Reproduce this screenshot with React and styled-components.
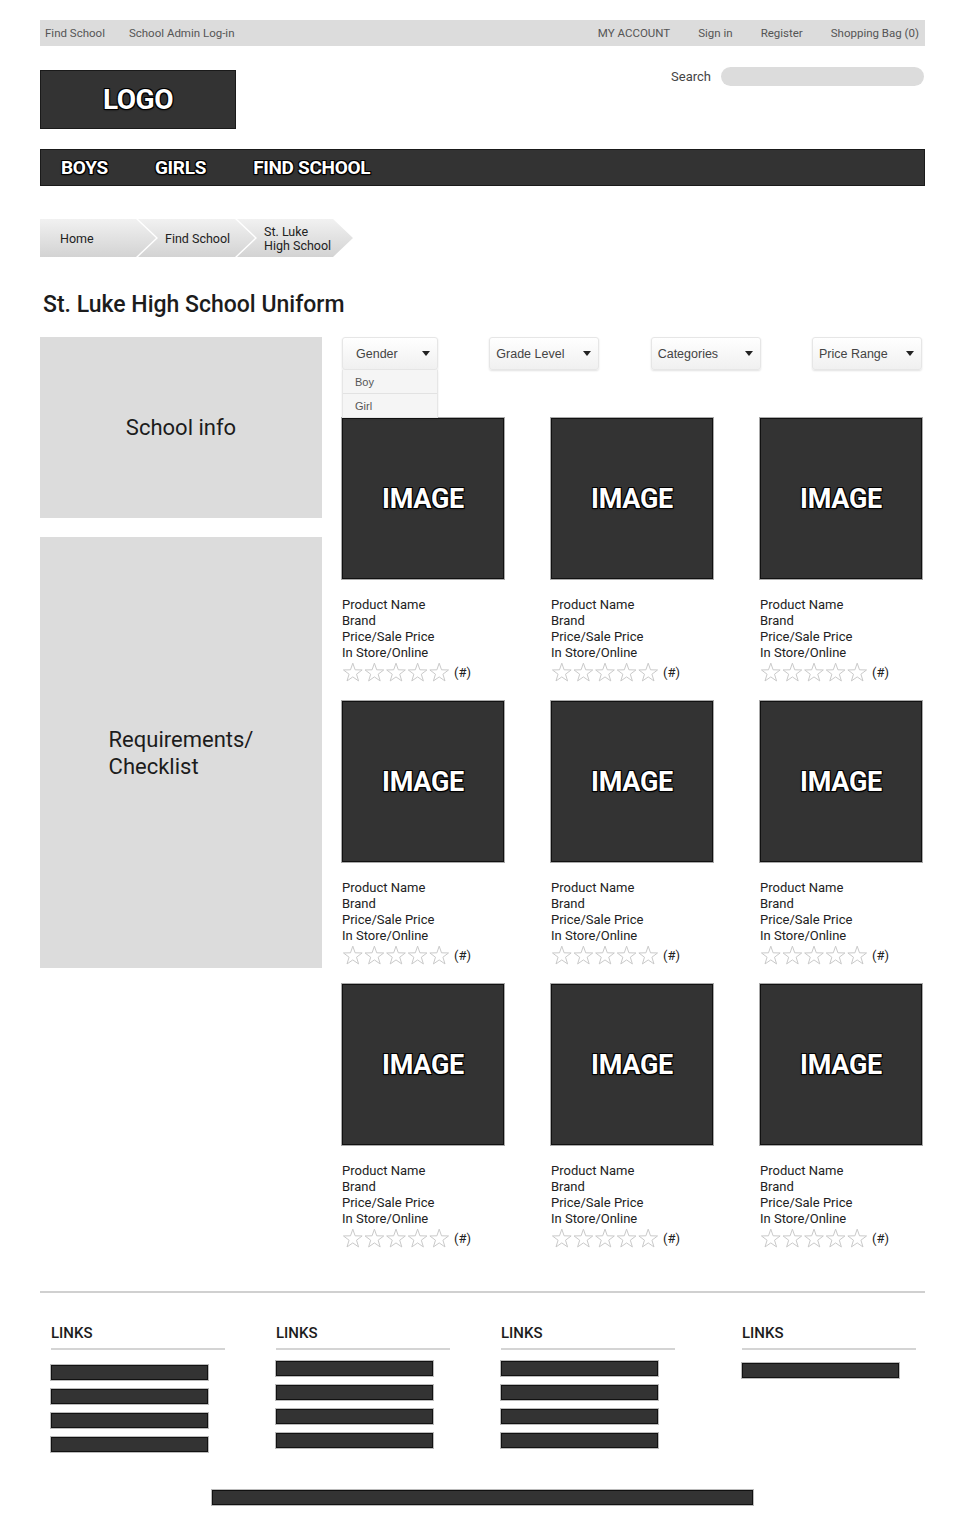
import React from 'react'
import styled, { createGlobalStyle } from 'styled-components'

const GlobalStyle = createGlobalStyle`
  body {
    margin: 0;
    background: #fff;
    font-family: Roboto, "Liberation Sans", sans-serif;
    color: #222;
  }
`

const outline = `
  -1px -1px 0 #000, 1px -1px 0 #000, -1px 1px 0 #000, 1px 1px 0 #000, 0 1px 2px #000
`

const Page = styled.div`
  width: 885px;
  margin: 0 0 0 40px;
  padding: 20px 0 27px;
`

const TopBar = styled.div`
  display: flex;
  align-items: center;
  height: 26px;
  padding: 0 6px 0 5px;
  background: #dcdcdc;
  font-size: 11.5px;
  color: #555;
`

const TopGroup = styled.div`
  display: flex;
  gap: ${p => p.$gap}px;
  margin-left: ${p => (p.$right ? 'auto' : '0')};
`

const Header = styled.div`
  display: flex;
  justify-content: space-between;
  align-items: flex-start;
  margin-top: 21px;
`

const Logo = styled.div`
  width: 194px;
  height: 57px;
  margin-top: 3px;
  background: #333;
  border: 1px solid #1a1a1a;
  display: flex;
  align-items: center;
  justify-content: center;
  color: #fff;
  font-size: 28px;
  font-weight: 700;
  letter-spacing: -0.5px;
  text-shadow: ${outline};
`

const SearchRow = styled.div`
  display: flex;
  align-items: center;
  gap: 10px;
  font-size: 13px;
  color: #444;
  padding-right: 1px;
`

const SearchInput = styled.div`
  width: 203px;
  height: 19px;
  border-radius: 10px;
  background: #dcdcdc;
`

const Nav = styled.div`
  display: flex;
  align-items: center;
  gap: 47px;
  height: 37px;
  margin-top: 20px;
  padding-left: 20px;
  background: #333;
  border: 1px solid #1a1a1a;
  box-sizing: border-box;
  color: #fff;
  font-size: 19px;
  font-weight: 700;
  letter-spacing: -0.3px;
  text-shadow: ${outline};
`

const Crumbs = styled.div`
  display: flex;
  margin-top: 33px;
  height: 38px;
`

const Crumb = styled.div`
  display: flex;
  align-items: center;
  box-sizing: border-box;
  width: ${p => p.$w}px;
  margin-left: ${p => (p.$first ? 0 : -20)}px;
  padding: 2px 0 0 ${p => (p.$first ? 20 : 27)}px;
  background: linear-gradient(to bottom, #f1f1f1, #d3d3d3);
  font-size: 12.5px;
  line-height: 14px;
  color: #222;
  clip-path: ${p =>
    p.$first
      ? 'polygon(0 0, calc(100% - 22px) 0, calc(100% - 2px) 50%, calc(100% - 22px) 100%, 0 100%)'
      : 'polygon(0 0, calc(100% - 22px) 0, calc(100% - 2px) 50%, calc(100% - 22px) 100%, 0 100%, 20px 50%)'};
`

const Title = styled.h1`
  margin: 34px 0 0 3px;
  font-size: 23px;
  line-height: 28px;
  font-weight: 500;
  color: #1c1c1c;
`

const Main = styled.div`
  display: grid;
  grid-template-columns: 282px 580px;
  column-gap: 20px;
  margin-top: 18px;
`

const Sidebar = styled.div`
  display: flex;
  flex-direction: column;
  gap: 19px;
`

const InfoBox = styled.div`
  height: ${p => p.$h}px;
  background: #dcdcdc;
  display: flex;
  align-items: center;
  justify-content: center;
  font-size: 22px;
  line-height: 27px;
  color: #1c1c1c;
`

const Filters = styled.div`
  display: flex;
  justify-content: space-between;
  position: relative;
  z-index: 2;
`

const Dropdown = styled.div`
  position: relative;
  width: ${p => p.$w}px;
`

const DropButton = styled.div`
  display: flex;
  align-items: center;
  justify-content: space-between;
  box-sizing: border-box;
  height: 33px;
  padding: 0 7px 0 ${p => p.$pad}px;
  background: linear-gradient(to bottom, #ffffff, #f0f0f0);
  border: 1px solid #e6e6e6;
  border-radius: 3px;
  box-shadow: 0 1px 2px rgba(0, 0, 0, 0.12);
  font-family: "Liberation Sans", Arial, sans-serif;
  font-size: 12.5px;
  color: #444;
`

const Caret = styled.span`
  width: 0;
  height: 0;
  border-left: 4px solid transparent;
  border-right: 4px solid transparent;
  border-top: 5px solid #222;
`

const Menu = styled.div`
  position: absolute;
  top: 33px;
  left: 0;
  right: 0;
  background: #f5f5f5;
  border: 1px solid #e6e6e6;
  border-top: none;
  box-shadow: 0 1px 2px rgba(0, 0, 0, 0.1);
  font-family: "Liberation Sans", Arial, sans-serif;
  font-size: 11px;
  color: #555;
`

const MenuItem = styled.div`
  height: 23px;
  line-height: 25px;
  padding-left: 12px;
  & + & {
    border-top: 1px solid #e2e2e2;
  }
`

const Grid = styled.div`
  display: grid;
  grid-template-columns: repeat(3, 162px);
  column-gap: 47px;
  row-gap: 18px;
  margin-top: 48px;
`

const Card = styled.div`
  display: flex;
  flex-direction: column;
`

const ImageBox = styled.div`
  height: 161px;
  box-sizing: border-box;
  background: #333;
  border: 1px solid #111;
  box-shadow: 0 0 0 1px #aaa;
  display: flex;
  align-items: center;
  justify-content: center;
  color: #fff;
  font-size: 27px;
  font-weight: 700;
  letter-spacing: -0.3px;
  text-shadow: ${outline};
`

const Info = styled.div`
  margin-top: 18px;
  font-size: 13px;
  line-height: 16px;
  color: #222;
`

const Rating = styled.div`
  display: flex;
  align-items: center;
  gap: 4px;
  height: 21px;
  margin-top: 1px;
  font-size: 13px;
  color: #222;
`

const Footer = styled.div`
  margin-top: 42px;
  border-top: 2px solid #d0d0d0;
`

const LinkCols = styled.div`
  display: grid;
  grid-template-columns: 225px 225px 241px 174px;
  padding-left: 11px;
  margin-top: 31px;
`

const LinkCol = styled.div`
  width: 174px;
`

const LinkTitle = styled.div`
  font-size: 15px;
  font-weight: 500;
  line-height: 18px;
  color: #1c1c1c;
  padding-bottom: 6px;
  border-bottom: 2px solid #d4d4d4;
`

const Bars = styled.div`
  display: flex;
  flex-direction: column;
  gap: 9px;
  margin-top: ${p => p.$top}px;
`

const Bar = styled.div`
  width: ${p => p.$w}px;
  height: 15px;
  box-sizing: border-box;
  background: #333;
  border: 1px solid #111;
  box-shadow: 0 0 0 1px #bbb;
`

const BottomBar = styled(Bar)`
  margin: 38px auto 0;
`

const Stars = () => (
  <svg width="108" height="21" viewBox="0 0 110 21">
    {[0, 1, 2, 3, 4].map(i => (
      <polygon
        key={i}
        transform={`translate(${i * 22} 0)`}
        points="11,1 13.35,7.76 20.51,7.91 14.8,12.24 16.88,19.09 11,15 5.12,19.09 7.2,12.24 1.49,7.91 8.65,7.76"
        fill="none"
        stroke="#c8c8c8"
        strokeWidth="1"
        strokeLinejoin="round"
      />
    ))}
  </svg>
)

const filters = [
  { label: 'Gender', w: 96, pad: 13, menu: ['Boy', 'Girl'] },
  { label: 'Grade Level', w: 110, pad: 6 },
  { label: 'Categories', w: 110, pad: 6 },
  { label: 'Price Range', w: 110, pad: 6 },
]

const linkCols = [
  { bars: 4, top: 15 },
  { bars: 4, top: 11 },
  { bars: 4, top: 11 },
  { bars: 1, top: 13 },
]

const App = () => {
  return (
    <Page>
      <GlobalStyle />
      <TopBar>
        <TopGroup $gap={24}>
          <span>Find School</span>
          <span>School Admin Log-in</span>
        </TopGroup>
        <TopGroup $gap={28} $right>
          <span>MY ACCOUNT</span>
          <span>Sign in</span>
          <span>Register</span>
          <span>Shopping Bag (0)</span>
        </TopGroup>
      </TopBar>

      <Header>
        <Logo>LOGO</Logo>
        <SearchRow>
          <span>Search</span>
          <SearchInput />
        </SearchRow>
      </Header>

      <Nav>
        <span>BOYS</span>
        <span>GIRLS</span>
        <span>FIND SCHOOL</span>
      </Nav>

      <Crumbs>
        <Crumb $first $w={118}>Home</Crumb>
        <Crumb $w={119}>Find School</Crumb>
        <Crumb $w={118}>St. Luke<br />High School</Crumb>
      </Crumbs>

      <Title>St. Luke High School Uniform</Title>

      <Main>
        <Sidebar>
          <InfoBox $h={181}>School info</InfoBox>
          <InfoBox $h={431}>
            <span>Requirements/<br />Checklist</span>
          </InfoBox>
        </Sidebar>

        <div>
          <Filters>
            {filters.map(f => (
              <Dropdown key={f.label} $w={f.w}>
                <DropButton $pad={f.pad}>
                  {f.label}
                  <Caret />
                </DropButton>
                {f.menu && (
                  <Menu>
                    {f.menu.map(m => <MenuItem key={m}>{m}</MenuItem>)}
                  </Menu>
                )}
              </Dropdown>
            ))}
          </Filters>

          <Grid>
            {Array.from({ length: 9 }).map((_, i) => (
              <Card key={i}>
                <ImageBox>IMAGE</ImageBox>
                <Info>
                  Product Name<br />
                  Brand<br />
                  Price/Sale Price<br />
                  In Store/Online
                </Info>
                <Rating>
                  <Stars />
                  <span>(#)</span>
                </Rating>
              </Card>
            ))}
          </Grid>
        </div>
      </Main>

      <Footer>
        <LinkCols>
          {linkCols.map((c, i) => (
            <LinkCol key={i}>
              <LinkTitle>LINKS</LinkTitle>
              <Bars $top={c.top}>
                {Array.from({ length: c.bars }).map((_, j) => <Bar key={j} $w={157} />)}
              </Bars>
            </LinkCol>
          ))}
        </LinkCols>
        <BottomBar $w={541} />
      </Footer>
    </Page>
  )
}

export default App
